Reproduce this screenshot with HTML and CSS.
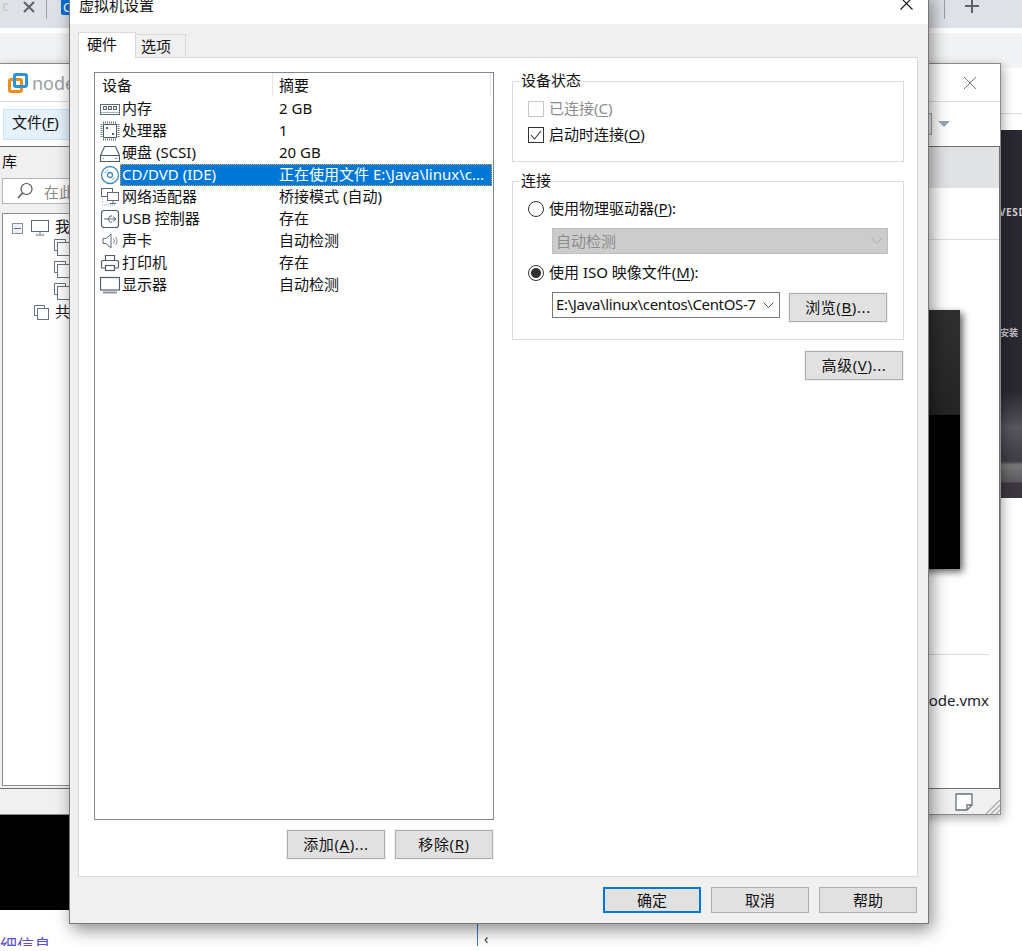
FILE: index.html
```html
<!DOCTYPE html>
<html lang="zh-CN">
<head>
<meta charset="utf-8">
<title>虚拟机设置</title>
<link rel="stylesheet" href="styles.css">
</head>
<body>
<div class="desktop">

  <div class="browser">
    <div class="tabstrip">
      <span class="tab-ghost">c</span>
      <svg class="tab-x" width="14" height="14" viewBox="0 0 14 14"><path d="M2 2l10 10M12 2L2 12" stroke="#5f6368" stroke-width="2" fill="none"/></svg>
      <span class="tab-sep"></span>
      <span class="tab-fav">C</span>
      <span class="tab-spacer"></span>
      <span class="tab-sep"></span>
      <svg class="tab-plus" width="16" height="16" viewBox="0 0 16 16"><path d="M8 1v14M1 8h14" stroke="#5f6368" stroke-width="2" fill="none"/></svg>
    </div>
    <div class="toolbar"></div>
    <div class="page-right">
      <div class="page-line"></div>
      <div class="page-hero">
        <span class="hero-t1">VESD</span>
        <span class="hero-t2">安装</span>
      </div>
    </div>
    <div class="page-band"></div>
    <div class="page-link">详细信息</div>
    <div class="page-rule"></div>
    <div class="page-mark">‹</div>
  </div>

  <div class="vm">
    <div class="vm-title">
      <svg width="20" height="20" viewBox="0 0 20 20" class="vm-logo"><rect x="1.500" y="6.500" width="12" height="12" rx="1.500" fill="none" stroke="#f28c18" stroke-width="3"/><rect x="6.500" y="1.500" width="12" height="12" rx="1.500" fill="none" stroke="#2a94d6" stroke-width="3"/></svg>
      <span class="vm-name">node</span>
      <span class="vm-flex"></span>
      <svg class="vm-close" width="14" height="14" viewBox="0 0 14 14"><path d="M1 1l12 12M13 1L1 13" stroke="#777" stroke-width="1" fill="none"/></svg>
    </div>
    <div class="vm-tools">
      <div class="vm-menu">文件(<u>F</u>)</div>
      <span class="vm-flex"></span>
      <span class="vm-tool-box"></span>
      <span class="vm-caret"></span>
    </div>
    <div class="vm-body">
      <div class="vm-side">
        <div class="side-head">库</div>
        <div class="side-search">
          <svg width="18" height="18" viewBox="0 0 18 18"><circle cx="10.500" cy="7" r="5.500" fill="none" stroke="#555" stroke-width="1.200"/><path d="M6.500 11L2 16" stroke="#555" stroke-width="1.500"/></svg>
          <span>在此</span>
        </div>
        <div class="side-tree">
          <div class="tree-row tree-top">
            <span class="tree-minus"></span>
            <svg width="18" height="16" viewBox="0 0 18 16"><rect x=".5" y=".5" width="17" height="11" fill="#fff" stroke="#5a6a78"/><path d="M9 12v2M5 15h8" stroke="#5a6a78"/></svg>
            <span class="tree-label">我</span>
          </div>
          <div class="tree-vm"><svg width="17" height="17" viewBox="0 0 17 17"><path d="M11.500 3.500v-3h-11v11h3" fill="none" stroke="#66727d"/><rect x="3.500" y="3.500" width="13" height="13" fill="#fff" stroke="#66727d"/></svg></div>
          <div class="tree-vm"><svg width="17" height="17" viewBox="0 0 17 17"><path d="M11.500 3.500v-3h-11v11h3" fill="none" stroke="#66727d"/><rect x="3.500" y="3.500" width="13" height="13" fill="#fff" stroke="#66727d"/></svg></div>
          <div class="tree-vm"><svg width="17" height="17" viewBox="0 0 17 17"><path d="M11.500 3.500v-3h-11v11h3" fill="none" stroke="#66727d"/><rect x="3.500" y="3.500" width="13" height="13" fill="#fff" stroke="#66727d"/></svg></div>
          <div class="tree-row tree-shared">
            <svg width="15" height="16" viewBox="0 0 15 16"><path d="M10.500 3.500v-3h-10v10h3" fill="none" stroke="#66727d"/><rect x="3.500" y="3.500" width="11" height="11" fill="#fff" stroke="#66727d"/></svg>
            <span class="tree-label">共</span>
          </div>
        </div>
      </div>
      <div class="vm-main">
        <div class="main-active"></div>
        <div class="main-gap"></div>
        <div class="main-hero"></div>
        <div class="main-line"></div>
        <div class="main-file">node.vmx</div>
      </div>
    </div>
    <div class="vm-status">
      <svg width="18" height="18" viewBox="0 0 18 18"><path d="M1 1h16v11l-5 5H1z" fill="#fff" stroke="#66727d" stroke-width="1.300"/><path d="M12 17v-5h5" fill="none" stroke="#66727d" stroke-width="1.300"/></svg>
      <svg class="grip" width="15" height="15" viewBox="0 0 15 15"><path d="M1 15L15 1M6 15L15 6M11 15l4-4" stroke="#aaa" stroke-width="1.400" fill="none"/></svg>
    </div>
  </div>

  <div class="dialog">
    <div class="dlg-title">
      <span>虚拟机设置</span>
      <svg class="dlg-close" width="13" height="13" viewBox="0 0 13 13"><path d="M.5.5l12 12M12.500.5l-12 12" stroke="#111" stroke-width="1.100" fill="none"/></svg>
    </div>
    <div class="dlg-body">
      <div class="tabs">
        <div class="tab tab-on">硬件</div>
        <div class="tab">选项</div>
      </div>
      <div class="panel">
        <div class="col-left">
          <div class="list">
            <div class="list-head">
              <span class="head-a">设备</span>
              <span class="head-b">摘要</span>
            </div>
            <div class="row">
              <svg class="ico" width="20" height="20" viewBox="0 0 20 20"><rect x=".5" y="5.500" width="19" height="10" fill="#fff" stroke="#5a6a78"/><rect x="3.500" y="7.500" width="3" height="3" fill="#e4e8eb" stroke="#5a6a78"/><rect x="8.500" y="7.500" width="3" height="3" fill="#e4e8eb" stroke="#5a6a78"/><rect x="13.500" y="7.500" width="3" height="3" fill="#e4e8eb" stroke="#5a6a78"/><path d="M1 13.500h18" stroke="#aab3ba"/></svg>
              <div class="cells"><span class="c-a">内存</span><span class="c-b">2 GB</span></div>
            </div>
            <div class="row">
              <svg class="ico" width="20" height="20" viewBox="0 0 20 20"><rect x="3.500" y="3.500" width="13" height="13" fill="#fff" stroke="#4f5d69"/><rect x="6" y="6" width="2" height="2" fill="#4f5d69"/><rect x="12" y="12" width="2" height="2" fill="#4f5d69"/><path d="M3 1.500h14M3 18.500h14M1.500 3v14M18.500 3v14" stroke="#66727d" stroke-width="2" stroke-dasharray="1 1" fill="none"/></svg>
              <div class="cells"><span class="c-a">处理器</span><span class="c-b">1</span></div>
            </div>
            <div class="row">
              <svg class="ico" width="20" height="20" viewBox="0 0 20 20"><path d="M4.500 3.500h11L19.500 12.500v6H.5v-6z" fill="#fff" stroke="#4f5d69" stroke-width="1.100"/><path d="M1 12.500h18" stroke="#4f5d69"/><path d="M3 15.500h1M15 15.500h2" stroke="#7b8894"/></svg>
              <div class="cells"><span class="c-a">硬盘 (SCSI)</span><span class="c-b">20 GB</span></div>
            </div>
            <div class="row row-sel">
              <svg class="ico" width="20" height="20" viewBox="0 0 20 20"><circle cx="10" cy="10" r="8.500" fill="#fff" stroke="#3f8ab8" stroke-width="1.300"/><circle cx="10" cy="10" r="2.500" fill="none" stroke="#3f8ab8" stroke-width="1.300"/><path d="M5 8a5.500 5.500 0 0 1 3-3M15 12a5.500 5.500 0 0 1-3 3" stroke="#7bb2d2" fill="none"/></svg>
              <div class="cells"><span class="c-a">CD/DVD (IDE)</span><span class="c-b">正在使用文件 E:\Java\linux\c...</span></div>
            </div>
            <div class="row">
              <svg class="ico" width="20" height="20" viewBox="0 0 20 20"><rect x="1.500" y="1.500" width="11" height="8" fill="#fff" stroke="#5a6a78"/><rect x="7.500" y="5.500" width="11" height="8" fill="#fff" stroke="#5a6a78"/><path d="M13 14v2M10 16.500h6" stroke="#5a6a78"/><path d="M2 12h2M2 15h2M2 18h14" stroke="#99a4ad" stroke-dasharray="1 1"/></svg>
              <div class="cells"><span class="c-a">网络适配器</span><span class="c-b">桥接模式 (自动)</span></div>
            </div>
            <div class="row">
              <svg class="ico" width="20" height="20" viewBox="0 0 20 20"><rect x="1.500" y="1.500" width="17" height="17" rx="2.500" fill="#fff" stroke="#4f5d69" stroke-width="1.200"/><path d="M4 10h12M13 7.500l3 2.500-3 2.500M8 10l2-3h2M8 10l2 3h2" fill="none" stroke="#5a6a78"/></svg>
              <div class="cells"><span class="c-a">USB 控制器</span><span class="c-b">存在</span></div>
            </div>
            <div class="row">
              <svg class="ico" width="20" height="20" viewBox="0 0 20 20"><path d="M3 7.500h3l5-4.500v14l-5-4.500H3z" fill="#fff" stroke="#5a6a78"/><path d="M13.500 7.500a4 4 0 0 1 0 5M15.500 6a6 6 0 0 1 0 8" fill="none" stroke="#7b8894"/></svg>
              <div class="cells"><span class="c-a">声卡</span><span class="c-b">自动检测</span></div>
            </div>
            <div class="row">
              <svg class="ico" width="20" height="20" viewBox="0 0 20 20"><path d="M5.500 7V2.500h9V7" fill="#fff" stroke="#4f5d69" stroke-width="1.200"/><rect x="1.500" y="7.500" width="17" height="7.500" rx="1" fill="#fff" stroke="#4f5d69" stroke-width="1.200"/><rect x="5.500" y="12.500" width="9" height="5" fill="#fff" stroke="#4f5d69" stroke-width="1.200"/></svg>
              <div class="cells"><span class="c-a">打印机</span><span class="c-b">存在</span></div>
            </div>
            <div class="row">
              <svg class="ico" width="20" height="20" viewBox="0 0 20 20"><rect x=".5" y="2.500" width="19" height="12.500" fill="#fff" stroke="#4f5d69" stroke-width="1.200"/><path d="M3 17.500h14" stroke="#8a96a0" stroke-width="2"/></svg>
              <div class="cells"><span class="c-a">显示器</span><span class="c-b">自动检测</span></div>
            </div>
          </div>
          <div class="list-actions">
            <button class="btn">添加(<u>A</u>)...</button>
            <button class="btn">移除(<u>R</u>)</button>
          </div>
        </div>
        <div class="col-right">
          <fieldset class="group g-state">
            <legend>设备状态</legend>
            <div class="opt opt-off"><span class="box box-off"></span>已连接(<u>C</u>)</div>
            <div class="opt"><span class="box"><svg width="12" height="10" viewBox="0 0 12 10"><path d="M1 5l3.500 4L11 1" fill="none" stroke="#333" stroke-width="1.100"/></svg></span>启动时连接(<u>O</u>)</div>
          </fieldset>
          <fieldset class="group g-conn">
            <legend>连接</legend>
            <div class="opt"><span class="radio"></span>使用物理驱动器(<u>P</u>):</div>
            <div class="combo combo-off"><span>自动检测</span><svg width="11" height="6" viewBox="0 0 11 6"><path d="M.5.5l5 5 5-5" fill="none" stroke="#aaa"/></svg></div>
            <div class="opt opt-iso"><span class="radio radio-on"></span>使用 ISO 映像文件(<u>M</u>):</div>
            <div class="iso-row">
              <div class="combo combo-iso"><span>E:\Java\linux\centos\CentOS-7</span><svg width="11" height="6" viewBox="0 0 11 6"><path d="M.5.5l5 5 5-5" fill="none" stroke="#555"/></svg></div>
              <button class="btn btn-browse">浏览(<u>B</u>)...</button>
            </div>
          </fieldset>
          <div class="adv-row"><button class="btn">高级(<u>V</u>)...</button></div>
        </div>
      </div>
      <div class="dlg-actions">
        <button class="btn btn-small btn-default">确定</button>
        <button class="btn btn-small">取消</button>
        <button class="btn btn-small">帮助</button>
      </div>
    </div>
  </div>
</div>
</body>
</html>
```
FILE: styles.css
```css
* { box-sizing: border-box; }
html, body { margin: 0; padding: 0; background: #fff; }
body {
  font-family: "Noto Sans", "Noto Sans CJK SC", sans-serif;
  font-size: 15px;
  color: #111;
}
.desktop { position: relative; width: 1022px; height: 946px; overflow: hidden; background: #fff; }

/* browser behind */
.browser { position: absolute; inset: 0; }
.tabstrip { height: 28px; background: #dee1e6; display: flex; align-items: flex-start; padding-left: 2px; overflow: hidden; }
.tab-ghost { width: 18px; color: #c4c7cb; font-size: 15px; line-height: 14px; margin-top: -2px; }
.tab-x { margin: 0 0 0 2px; }
.tab-sep { width: 1px; height: 19px; background: #9aa0a6; margin-left: 10px; }
.tab-fav { width: 15px; height: 15px; margin-left: 14px; background: #0a6fd8; color: #fff; font-size: 13px; line-height: 14px; padding-left: 2px; border-radius: 0 0 2px 2px; }
.tab-spacer { flex: 1; }
.tabstrip .tab-sep:nth-last-of-type(2) { margin-left: 0; }
.tab-plus { margin: -2px 42px 0 19px; flex: none; }
.toolbar { height: 35px; margin-top: 5px; background: #f1f3f4; }
.page-right { position: absolute; left: 1000px; top: 68px; width: 22px; }
.page-line { height: 46px; border-bottom: 1px solid #dcdcdc; }
.page-hero {
  position: relative; margin-top: 16px; height: 368px;
  background: linear-gradient(#2a2831 0, #2a2831 71%, #55555e 81%, #3e3d46 90%, #777779 91%, #5c5b5f 95.500%, #3c3640 96%, #3c3640 100%);
  overflow: hidden;
}
.hero-t1 { position: absolute; left: -1px; top: 75px; color: #d0d0d4; font-size: 10px; line-height: 14px; font-weight: 700; letter-spacing: .6px; }
.hero-t2 { position: absolute; left: 0; top: 196px; color: #c4c4c8; font-size: 9px; font-weight: 700; }
.page-band { position: absolute; left: 0; top: 814px; width: 70px; height: 96px; background: #000; }
.page-link { position: absolute; left: -17px; top: 935px; color: #5b50c8; font-size: 17px; line-height: 22px; }
.page-rule { position: absolute; left: 477px; top: 923px; width: 1px; height: 23px; background: #3b7ec4; }
.page-mark { position: absolute; left: 484px; top: 930px; font-size: 14px; line-height: 18px; color: #333; }

/* VMware window */
.vm {
  position: absolute; left: -1px; top: 63px; width: 1002px; height: 752px;
  display: flex; flex-direction: column;
  background: #f0f0f0; border: 1px solid #8a8a8a;
  box-shadow: 2px 3px 10px rgba(0,0,0,.35);
}
.vm-title { height: 37px; background: #fff; display: flex; align-items: center; padding: 0 23px 0 7px; }
.vm-logo { margin-left: 1px; }
.vm-name { margin-left: 4px; font-size: 18px; color: #9aa0a6; }
.vm-flex { flex: 1; }
.vm-tools { height: 46px; background: #fff; border-top: 1px solid #dcdcdc; border-bottom: 1px solid #6f6f6f; display: flex; align-items: center; padding: 0 50px 0 3px; }
.vm-menu { width: 67px; height: 31px; background: #e5f1fb; border: 1px solid #cce4f7; padding-left: 8px; line-height: 24px; }
.vm-tool-box { width: 5px; height: 22px; border: 1px solid #9aa4ad; border-left: 0; background: #f3f3f3; margin-right: 6px; }
.vm-caret { width: 0; height: 0; border-left: 6px solid transparent; border-right: 6px solid transparent; border-top: 6px solid #9aa4ad; }
.vm-body { flex: 1; display: flex; min-height: 0; }
.vm-side { width: 70px; flex: none; padding: 0 0 0 2px; display: flex; flex-direction: column; overflow: hidden; background: #f0f0f0; }
.side-head { margin: 3px 0 6px 0; line-height: 22px; }
.side-search { width: 90px; height: 26px; border: 1px solid #b5b5b5; background: #fff; display: flex; align-items: center; gap: 10px; padding-left: 13px; color: #8a8a8a; white-space: nowrap; flex: none; margin-bottom: 9px; }
.side-tree { width: 90px; height: 573px; background: #fff; border: 1px solid #8a8f96; padding: 5px 0 0 9px; flex: none; }
.tree-row { display: flex; align-items: center; white-space: nowrap; }
.tree-top { height: 18px; gap: 8px; }
.tree-label { margin: -4px 0 0 -2px; line-height: 18px; }
.tree-vm { height: 22px; padding: 2px 0 0 42px; }
.tree-minus { width: 11px; height: 11px; border: 1px solid #8a8f96; background: linear-gradient(#5a6f8a,#5a6f8a) center/7px 1px no-repeat #eef1f5; }
.tree-shared { height: 22px; gap: 8px; padding-left: 22px; margin-top: -1px; }
.vm-main { flex: 1; min-width: 0; background: #fff; border-right: 1px solid #6f6f6f; display: flex; flex-direction: column; overflow: hidden; }
.main-active { height: 41px; background: #e1e2e4; flex: none; }
.main-gap { height: 52px; border-bottom: 1px solid #dcdcdc; flex: none; }
.main-hero { height: 259px; margin: 70px 39px 0 200px; flex: none; background: linear-gradient(#2f2f2f, #242424 105px, #000 105px); box-shadow: 3px 3px 7px rgba(0,0,0,.6); }
.main-line { height: 1px; margin: 85px 10px 0 200px; background: #dcdcdc; flex: none; }
.main-file { margin: 34px 10px 0 0; text-align: right; line-height: 22px; font-size: 15px; color: #1a2230; }
.vm-status { height: 26px; flex: none; background: #f0f0f0; border-top: 1px solid #6f6f6f; display: flex; align-items: center; justify-content: flex-end; padding-right: 0; gap: 12px; position: relative; }
.grip { align-self: flex-end; }

/* settings dialog */
.dialog {
  position: absolute; left: 69px; top: -8px; width: 860px; height: 932px;
  display: flex; flex-direction: column;
  background: #f0f0f0; border: 1px solid #777;
  box-shadow: 3px 6px 16px rgba(0,0,0,.45);
}
.dlg-title { height: 31px; flex: none; background: #fff; display: flex; align-items: center; justify-content: space-between; padding: 0 14px 7px 9px; line-height: 20px; }
.dlg-close { margin: 0 1px 3px 0; }
.dlg-body { flex: 1; display: flex; flex-direction: column; padding: 9px 10px 0 8px; min-height: 0; }
.tabs { display: flex; height: 25px; flex: none; align-items: flex-end; position: relative; z-index: 1; margin-bottom: -1px; }
.tab { width: 50px; height: 24px; line-height: 18px; padding: 2px 0 0 5px; background: #f0f0f0; border: 1px solid #d9d9d9; border-left: 0; }
.tab-on { width: 58px; height: 26px; background: #fff; border-left: 1px solid #d9d9d9; border-bottom: 0; padding: 0 0 0 8px; line-height: 22px; }
.panel { height: 820px; flex: none; background: #fff; border: 1px solid #d9d9d9; display: flex; padding: 14px 13px 0 15px; gap: 18px; }
.col-left { width: 400px; flex: none; display: flex; flex-direction: column; }
.col-right { width: 392px; flex: none; }
.list { height: 748px; flex: none; border: 1px solid #828790; }
.list-head { display: flex; height: 24px; line-height: 25px; }
.head-a { width: 178px; padding-left: 7px; border-right: 1px solid #e5e5e5; }
.head-b { padding-left: 6px; flex: 1; border-right: 1px solid #e5e5e5; margin-right: 2px; }
.row { display: flex; height: 22px; align-items: center; }
.list-head + .row { margin-top: 1px; }
.ico { width: 20px; height: 20px; margin-left: 5px; flex: none; }
.cells { display: flex; flex: none; width: 372px; height: 22px; line-height: 21px; white-space: nowrap; }
.c-a { width: 159px; padding-left: 2px; flex: none; }
.c-b { flex: 1; }
.row-sel .cells { background: #0078d7; color: #fff; outline: 1px dotted #f0a040; outline-offset: -1px; }
.list-actions { display: flex; justify-content: flex-end; gap: 10px; margin-top: 10px; padding-right: 1px; }
.btn { width: 98px; height: 29px; padding: 0 0 2px; font: inherit; letter-spacing: .6px; color: #111; background: #e1e1e1; border: 1px solid #adadad; box-shadow: 0 0 0 1px #f3f3f3; }
.btn-small { height: 26px; box-shadow: none; letter-spacing: 0; }
.btn-default { border: 2px solid #0078d7; }
.dlg-actions { display: flex; justify-content: flex-end; gap: 10px; margin-top: 10px; padding-right: 1px; }
.group { margin: 0; padding: 6px 14px 0 15px; border: 1px solid #dcdcdc; min-width: 0; }
.group legend { padding: 0 2px; margin-left: -9px; line-height: 17px; height: 18px; }
.g-state { height: 90px; }
.g-conn { height: 168px; margin-top: 10px; }
.opt { display: flex; align-items: flex-start; height: 26px; line-height: 25px; white-space: nowrap; }
.opt-off { color: #8c8c8c; }
.opt-iso { margin-top: 6px; }
.box { width: 16px; height: 16px; margin-top: 5px; border: 1px solid #333; background: #fff; margin-right: 5px; display: flex; align-items: center; justify-content: center; flex: none; }
.box-off { border-color: #c8c8c8; }
.radio { width: 16px; height: 16px; margin-top: 5px; border: 1px solid #333; border-radius: 50%; background: #fff; margin-right: 5px; flex: none; }
.radio-on { background: radial-gradient(circle, #333 0, #333 4.500px, #fff 5.500px); }
.combo { margin-left: 24px; height: 26px; display: flex; align-items: center; justify-content: space-between; padding: 0 5px 0 3px; white-space: nowrap; }
.combo span { margin-top: -2px; }
.combo-off { width: 336px; margin-top: 6px; background: #ccc; border: 1px solid #bfbfbf; color: #8c8c8c; }
.combo-iso { width: 228px; flex: none; background: #fff; border: 1px solid #7a7a7a; overflow: hidden; }
.combo-iso span { letter-spacing: -.36px; }
.iso-row { display: flex; align-items: flex-start; margin-top: 6px; gap: 9px; }
.btn-browse { margin-top: 1px; }
.adv-row { display: flex; justify-content: flex-end; margin-top: 11px; padding-right: 1px; }
u { text-underline-offset: 2px; }
```
